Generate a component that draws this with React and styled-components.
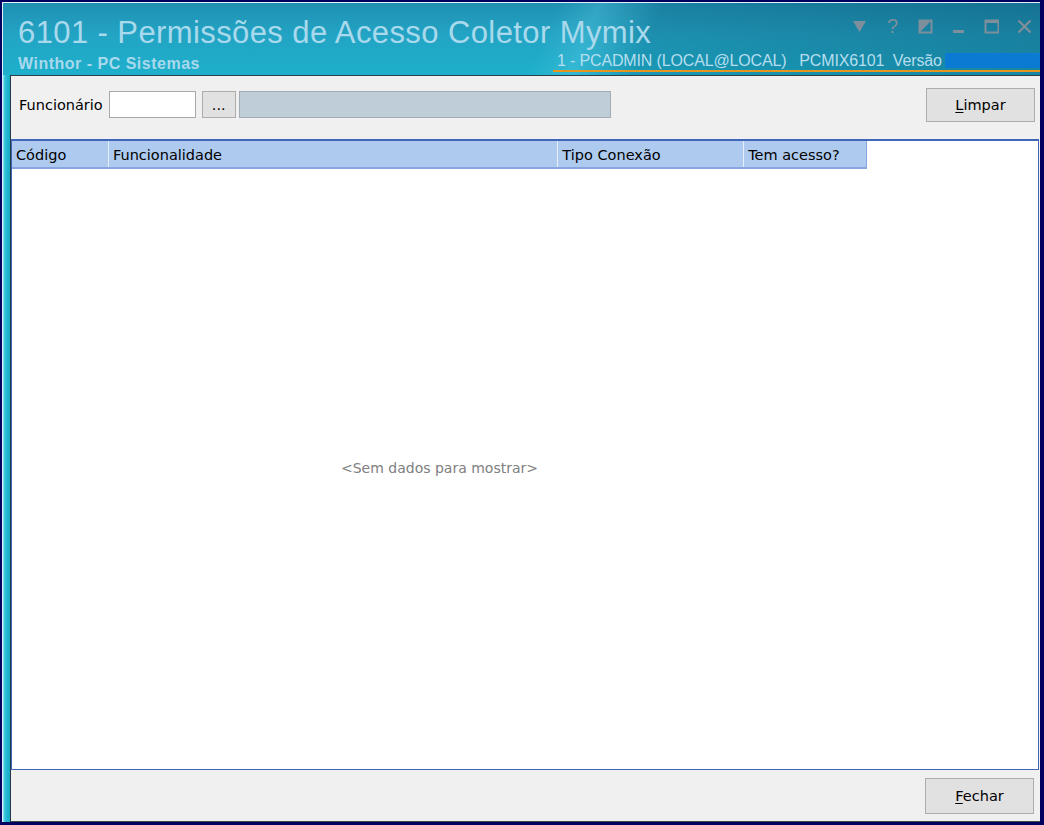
import React from 'react';
import styled, { createGlobalStyle } from 'styled-components';

const GlobalStyle = createGlobalStyle`
  html, body {
    margin: 0;
    padding: 0;
    background: #00005e;
  }
  body {
    font-family: 'DejaVu Sans', 'Liberation Sans', sans-serif;
    color: #000;
  }
`;

const Frame = styled.div`
  width: 1044px;
  height: 825px;
  box-sizing: border-box;
  padding: 2px 4px 3px 2px;
  background: #00005e;
`;

const Window = styled.div`
  height: 100%;
  display: flex;
  flex-direction: column;
  box-sizing: border-box;
  border-top: 1px solid #dff3f8;
  border-left: 1px solid #dff3f8;
  background:
    linear-gradient(90deg, #8ee4f0 0px, #2ec0d6 2px, #1db4cc 5px, #1aa9c4 7px);
`;

const TitleBar = styled.div`
  height: 72px;
  flex-shrink: 0;
  box-sizing: border-box;
  padding: 12px 0 0 15px;
  display: flex;
  flex-direction: column;
  background:
    linear-gradient(112deg, rgba(255,255,255,0) 0%, rgba(255,255,255,0) 52%, rgba(120,220,240,0.22) 56%, rgba(0,50,80,0.18) 62%, rgba(0,40,70,0.3) 100%),
    linear-gradient(180deg, #1f90b2 0%, #23a4c4 45%, #1db0cc 100%);
`;

const TitleRow = styled.div`
  display: flex;
  justify-content: space-between;
  align-items: flex-start;
`;

const Title = styled.div`
  font-family: 'Liberation Sans', Arial, sans-serif;
  font-size: 31px;
  line-height: 36px;
  letter-spacing: 0.4px;
  color: #a9d9ec;
  white-space: nowrap;
`;

const Controls = styled.div`
  display: flex;
  align-items: center;
  gap: 18px;
  margin: 2px 8px 0 0;
  height: 18px;
`;

const ControlIcon = styled.svg`
  width: 15px;
  height: 15px;
  display: block;
`;

const HelpGlyph = styled.span`
  width: 15px;
  text-align: center;
  font-family: 'Liberation Sans', Arial, sans-serif;
  font-size: 20px;
  line-height: 18px;
  color: #7d8f9a;
`;

const InfoRow = styled.div`
  display: flex;
  justify-content: space-between;
  align-items: flex-end;
  margin-top: 1px;
`;

const Subtitle = styled.div`
  font-family: 'Liberation Sans', Arial, sans-serif;
  font-weight: bold;
  font-size: 16px;
  line-height: 18px;
  letter-spacing: 0.5px;
  color: #a9d9ec;
`;

const Session = styled.div`
  display: flex;
  align-items: center;
  width: 487px;
  box-sizing: border-box;
  padding-left: 4px;
  border-bottom: 2px solid #e8951f;
  margin-bottom: 1px;
`;

const SessionText = styled.span`
  font-family: 'Liberation Sans', Arial, sans-serif;
  font-size: 16px;
  line-height: 18px;
  color: #b6deee;
  white-space: pre;
  letter-spacing: -0.15px;
`;

const VersionBox = styled.span`
  flex: 1;
  height: 15px;
  margin: 0 0 1px 3px;
  background: #0a7ad2;
`;

const Body = styled.div`
  flex: 1;
  display: flex;
  flex-direction: column;
  margin-left: 7px;
  box-sizing: border-box;
  border-left: 1px solid #263845;
  border-top: 1px solid #2f3f48;
  border-bottom: 1px solid #3a4a44;
  background: #f0f0f0;
  min-height: 0;
`;

const Toolbar = styled.div`
  height: 63px;
  flex-shrink: 0;
  display: flex;
  align-items: center;
  padding: 0 5px 6px 8px;
  box-sizing: border-box;
`;

const Label = styled.span`
  font-size: 14.5px;
  margin-right: 6px;
`;

const TextInput = styled.div`
  width: ${p => p.$w}px;
  height: 27px;
  box-sizing: border-box;
  border: 1px solid ${p => (p.$readOnly ? '#a3acb4' : '#a8a8a8')};
  background: ${p => (p.$readOnly ? '#bfcdd9' : '#ffffff')};
  margin-right: ${p => p.$mr || 0}px;
`;

const Button = styled.button`
  width: ${p => p.$w}px;
  height: ${p => p.$h}px;
  box-sizing: border-box;
  padding: 0;
  border: 1px solid #adadad;
  background: #e1e1e1;
  font-family: 'DejaVu Sans', sans-serif;
  font-size: 14.5px;
  color: #000;
  display: flex;
  align-items: center;
  justify-content: center;
  margin-right: ${p => p.$mr || 0}px;

  u {
    text-decoration-thickness: 1px;
    text-underline-offset: 2px;
  }
`;

const Spacer = styled.div`
  flex: 1;
`;

const Grid = styled.div`
  flex: 1;
  display: flex;
  flex-direction: column;
  margin: 0 1px 0 0;
  border: 1px solid #3f66b8;
  border-top-width: 2px;
  background: #ffffff;
  min-height: 0;
`;

const HeaderRow = styled.div`
  display: flex;
  width: 855px;
  height: 28px;
  box-sizing: border-box;
  background: #aecbef;
  border-bottom: 2px solid #87a7de;
  border-right: 1px solid #87a7de;
`;

const HeaderCell = styled.div`
  width: ${p => p.$w}px;
  box-sizing: border-box;
  padding: 2px 0 0 4px;
  display: flex;
  align-items: center;
  font-size: 14.5px;
  border-left: ${p => (p.$first ? 'none' : '1px solid #e6f0fc')};
`;

const EmptyArea = styled.div`
  flex: 1;
  width: 855px;
  display: flex;
  align-items: center;
  justify-content: center;
  font-size: 14px;
  color: #808080;
  padding-bottom: 2px;
`;

const Footer = styled.div`
  height: 51px;
  flex-shrink: 0;
  display: flex;
  align-items: center;
  justify-content: flex-end;
  padding-right: 6px;
`;

const columns = [
  { name: 'Código', w: 96 },
  { name: 'Funcionalidade', w: 450 },
  { name: 'Tipo Conexão', w: 186 },
  { name: 'Tem acesso?', w: 123 },
];

const iconColor = '#7d8f9a';

const WindowControls = () => (
  <Controls>
    <ControlIcon viewBox="0 0 15 15">
      <path d="M1 2 H14 L7.5 13 Z" fill={iconColor} />
    </ControlIcon>
    <HelpGlyph>?</HelpGlyph>
    <ControlIcon viewBox="0 0 15 15">
      <rect x="1.5" y="1.5" width="12" height="12" fill="none" stroke={iconColor} strokeWidth="2" />
      <path d="M1 1 H14 L1 14 Z" fill={iconColor} />
    </ControlIcon>
    <ControlIcon viewBox="0 0 15 15">
      <rect x="2" y="11" width="11" height="3" fill={iconColor} />
    </ControlIcon>
    <ControlIcon viewBox="0 0 15 15">
      <rect x="1.5" y="1.5" width="13" height="12" fill="none" stroke={iconColor} strokeWidth="2" />
      <rect x="1" y="1" width="14" height="3" fill={iconColor} />
    </ControlIcon>
    <ControlIcon viewBox="0 0 15 15">
      <path d="M1.5 1.5 L13.5 13.5 M13.5 1.5 L1.5 13.5" stroke={iconColor} strokeWidth="2.4" />
    </ControlIcon>
  </Controls>
);

const App = () => (
  <Frame>
    <GlobalStyle />
    <Window>
      <TitleBar>
        <TitleRow>
          <Title>6101 - Permissões de Acesso Coletor Mymix</Title>
          <WindowControls />
        </TitleRow>
        <InfoRow>
          <Subtitle>Winthor - PC Sistemas</Subtitle>
          <Session>
            <SessionText>1 - PCADMIN (LOCAL@LOCAL)   PCMIX6101  Versão</SessionText>
            <VersionBox />
          </Session>
        </InfoRow>
      </TitleBar>

      <Body>
        <Toolbar>
          <Label>Funcionário</Label>
          <TextInput $w={87} $mr={6} />
          <Button $w={34} $h={27} $mr={3}>...</Button>
          <TextInput $w={372} $readOnly />
          <Spacer />
          <Button $w={109} $h={34}><span><u>L</u>impar</span></Button>
        </Toolbar>

        <Grid>
          <HeaderRow>
            {columns.map((c, i) => (
              <HeaderCell key={c.name} $w={c.w} $first={i === 0}>{c.name}</HeaderCell>
            ))}
          </HeaderRow>
          <EmptyArea>&lt;Sem dados para mostrar&gt;</EmptyArea>
        </Grid>

        <Footer>
          <Button $w={109} $h={36}><span><u>F</u>echar</span></Button>
        </Footer>
      </Body>
    </Window>
  </Frame>
);

export default App;
